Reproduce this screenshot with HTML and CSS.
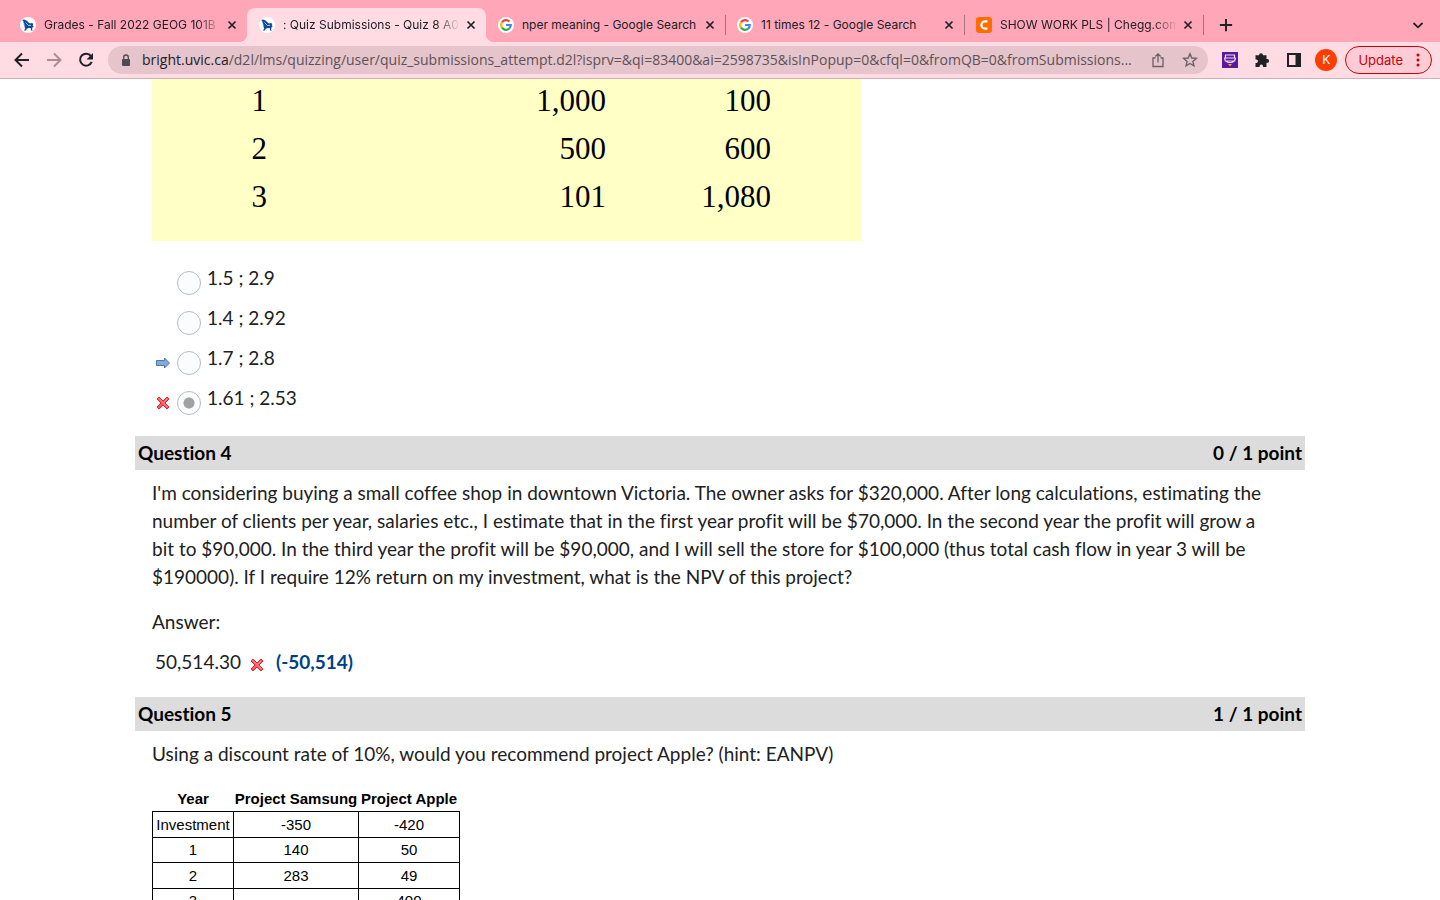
FILE: index.html
```html
<!DOCTYPE html>
<html lang="en">
<head>
    <meta charset="UTF-8">
    <meta name="viewport" content="width=device-width, initial-scale=1.0">
    <title>Quiz Submissions - Quiz 8</title>
    <link rel="stylesheet" href="styles.css">
</head>
<body>
    <svg class="sprite" aria-hidden="true">
        <symbol id="uvic" viewBox="0 0 16 16">
            <circle cx="8" cy="8" r="8" fill="#fff"/>
            <path d="M2.200 3L4 2.400L6.500 3.600L8.300 5.200L10 6.500L12 6L13.400 7L12.600 8.200L13.800 9.200L12.600 10.200L12 12.600L13 13.500H10.800L11 11.300L8.800 11L6.800 11.800L6 13.500H4L5.300 11.200L4 9.500L5.400 9.400L3.400 7.600L4.900 7.500L3 5.500L4 5.300z" fill="#0b4a9b"/>
            <path d="M5.500 5.500L8.500 8.500L11 8.300" fill="none" stroke="#fff" stroke-width=".7"/>
        </symbol>
        <symbol id="google" viewBox="0 0 16 16">
            <circle cx="8" cy="8" r="8" fill="#fff"/>
            <g fill="none" stroke-width="2.2">
                <path d="M4 5.3A4.8 4.8 0 0 1 11.4 4.6" stroke="#ea4335"/>
                <path d="M4 5.3A4.8 4.8 0 0 0 4 10.7" stroke="#fbbc05"/>
                <path d="M4 10.7A4.8 4.8 0 0 0 11.1 11.7" stroke="#34a853"/>
                <path d="M8 8H12.8A4.8 4.8 0 0 1 11.1 11.7" stroke="#4285f4"/>
            </g>
        </symbol>
        <symbol id="chegg" viewBox="0 0 16 16">
            <rect width="16" height="16" rx="3" fill="#ff6d00"/>
            <path d="M11.4 4.4H9A3.6 3.6 0 0 0 9 11.6H11.4" fill="none" stroke="#fff" stroke-width="2.2"/>
        </symbol>
        <symbol id="close" viewBox="0 0 16 16">
            <path d="M4.5 4.5l7 7M11.5 4.5l-7 7" stroke="#202124" stroke-width="1.7"/>
        </symbol>
        <symbol id="wrong" viewBox="0 0 14 14">
            <path d="M3 1L7 5l4-4 2 2-4 4 4 4-2 2-4-4-4 4-2-2 4-4-4-4z" fill="#ff5a5f" stroke="#e8222a" stroke-width="1"/>
            <path d="M3 2.5L11.5 11M11 3L8.5 5.5" stroke="#ff9a9a" stroke-width="1" fill="none"/>
        </symbol>
    </svg>

    <header class="browser">
        <div class="tab-strip">
            <div class="tab">
                <svg class="favicon"><use href="#uvic"/></svg>
                <span class="tab-title fade">Grades - Fall 2022 GEOG 101B</span>
                <button class="tab-close" aria-label="Close tab"><svg><use href="#close"/></svg></button>
            </div>
            <div class="tab active">
                <svg class="favicon"><use href="#uvic"/></svg>
                <span class="tab-title fade">: Quiz Submissions - Quiz 8 A0</span>
                <button class="tab-close" aria-label="Close tab"><svg><use href="#close"/></svg></button>
            </div>
            <div class="tab line">
                <svg class="favicon"><use href="#google"/></svg>
                <span class="tab-title">nper meaning - Google Search</span>
                <button class="tab-close" aria-label="Close tab"><svg><use href="#close"/></svg></button>
            </div>
            <div class="tab line">
                <svg class="favicon"><use href="#google"/></svg>
                <span class="tab-title">11 times 12 - Google Search</span>
                <button class="tab-close" aria-label="Close tab"><svg><use href="#close"/></svg></button>
            </div>
            <div class="tab line">
                <svg class="favicon"><use href="#chegg"/></svg>
                <span class="tab-title fade">SHOW WORK PLS | Chegg.com</span>
                <button class="tab-close" aria-label="Close tab"><svg><use href="#close"/></svg></button>
            </div>
            <button class="new-tab" aria-label="New tab">
                <svg viewBox="0 0 16 16"><path d="M8 1v14M1 8h14" stroke="#202124" stroke-width="2.200"/></svg>
            </button>
            <button class="tab-search" aria-label="Search tabs">
                <svg viewBox="0 0 16 16"><path d="M3.500 6L8 10.300L12.500 6" fill="none" stroke="#202124" stroke-width="1.800"/></svg>
            </button>
        </div>

        <div class="toolbar">
            <div class="nav">
                <button aria-label="Back"><svg viewBox="0 0 16 16"><path d="M15 8H2M8 1.500L1.500 8L8 14.500" fill="none" stroke="#202124" stroke-width="2"/></svg></button>
                <button aria-label="Forward"><svg viewBox="0 0 16 16"><path d="M1 8H14M8 1.500L14.500 8L8 14.500" fill="none" stroke="#a58f95" stroke-width="2"/></svg></button>
                <button aria-label="Reload"><svg viewBox="0 0 16 16"><path d="M13 4.200A6 6 0 1 0 13.700 9.800" fill="none" stroke="#202124" stroke-width="2"/><path d="M15 1v6.500H8.500z" fill="#202124"/></svg></button>
            </div>
            <div class="address">
                <svg class="lock" viewBox="0 0 10 13"><rect x="1" y="5" width="8" height="7" rx="1" fill="#4d4a50"/><path d="M2.700 5V3.300a2.300 2.300 0 0 1 4.600 0V5" fill="none" stroke="#4d4a50" stroke-width="1.300"/></svg>
                <span class="url"><b>bright.uvic.ca</b>/d2l/lms/quizzing/user/quiz_submissions_attempt.d2l?isprv=&amp;qi=83400&amp;ai=2598735&amp;isInPopup=0&amp;cfql=0&amp;fromQB=0&amp;fromSubmissions...</span>
                <button aria-label="Share"><svg viewBox="0 0 16 16"><path d="M5.500 6H3v8.500h10V6h-2.500M8 10.500V2M5.300 4.500L8 1.800l2.700 2.700" fill="none" stroke="#6b6166" stroke-width="1.300"/></svg></button>
                <button aria-label="Bookmark"><svg viewBox="0 0 16 16"><path d="M8 1.800l1.800 4.200 4.500.4-3.400 3 1 4.400L8 11.500l-3.900 2.300 1-4.400-3.400-3 4.500-.4z" fill="none" stroke="#6b6166" stroke-width="1.400"/></svg></button>
            </div>
            <div class="extensions">
                <button aria-label="Coupon extension"><svg viewBox="0 0 16 16"><rect width="16" height="16" fill="#5a189a"/><path d="M3.500 3h9v3h-9zM2.500 5.500L3.300 9h9.400l.8-3.500M4 9l2 1.500h4L12 9" fill="none" stroke="#e9dcf7" stroke-width="1.200"/><path d="M6 12h4l-2 2.500z" fill="#f0a33a"/></svg></button>
                <button aria-label="Extensions"><svg viewBox="0 0 16 16"><path d="M5 3.300a2 2 0 0 1 4 0H12.500V7h.7a1.900 1.900 0 0 1 0 3.800h-.7V15H9v-.8a1.700 1.700 0 0 0-3.400 0v.8H1.500v-4h.7a1.800 1.800 0 0 0 0-3.600h-.7V3.300z" fill="#202124"/></svg></button>
                <button aria-label="Side panel"><svg viewBox="0 0 16 16"><path d="M1 1h14v14H1zM3 3v10h6.500V3z" fill="#202124" fill-rule="evenodd"/></svg></button>
                <button class="avatar" aria-label="Profile">K</button>
                <button class="update">Update
                    <svg viewBox="0 0 4 14"><path d="M2 2v0M2 7v0M2 12v0" stroke="#c5000b" stroke-width="3" stroke-linecap="round"/></svg>
                </button>
            </div>
        </div>
    </header>

    <main class="page">
        <table class="cash-flows">
            <tr><td>1</td><td>1,000</td><td>100</td></tr>
            <tr><td>2</td><td>500</td><td>600</td></tr>
            <tr><td>3</td><td>101</td><td>1,080</td></tr>
        </table>

        <div class="options">
            <div class="option">
                <span class="mark"></span>
                <input type="radio" name="q3" id="q3a">
                <label for="q3a">1.5 ; 2.9</label>
            </div>
            <div class="option">
                <span class="mark"></span>
                <input type="radio" name="q3" id="q3b">
                <label for="q3b">1.4 ; 2.92</label>
            </div>
            <div class="option">
                <span class="mark"><svg viewBox="0 0 14 14"><path d="M.5 4.500h8v-2.500L13.500 7l-5 5V9.500h-8z" fill="#86a9dc" stroke="#4d74b0"/></svg></span>
                <input type="radio" name="q3" id="q3c">
                <label for="q3c">1.7 ; 2.8</label>
            </div>
            <div class="option">
                <span class="mark"><svg><use href="#wrong"/></svg></span>
                <input type="radio" name="q3" id="q3d" checked>
                <label for="q3d">1.61 ; 2.53</label>
            </div>
        </div>

        <section>
            <h2 class="question-bar"><span>Question 4</span><span>0 / 1 point</span></h2>
            <div class="question">
                <p>I'm considering buying a small coffee shop in downtown Victoria. The owner asks for $320,000. After long calculations, estimating the number of clients per year, salaries etc., I estimate that in the first year profit will be $70,000. In the second year the profit will grow a bit to $90,000. In the third year the profit will be $90,000, and I will sell the store for $100,000 (thus total cash flow in year 3 will be $190000). If I require 12% return on my investment, what is the NPV of this project?</p>
                <p class="answer-label">Answer:</p>
                <p class="answer">50,514.30 <svg><use href="#wrong"/></svg> <strong>(-50,514)</strong></p>
            </div>
        </section>

        <section>
            <h2 class="question-bar"><span>Question 5</span><span>1 / 1 point</span></h2>
            <div class="question">
                <p>Using a discount rate of 10%, would you recommend project Apple? (hint: EANPV)</p>
                <table class="projects">
                    <thead>
                        <tr><th>Year</th><th>Project Samsung</th><th>Project Apple</th></tr>
                    </thead>
                    <tbody>
                        <tr><td>Investment</td><td>-350</td><td>-420</td></tr>
                        <tr><td>1</td><td>140</td><td>50</td></tr>
                        <tr><td>2</td><td>283</td><td>49</td></tr>
                        <tr><td>3</td><td></td><td>400</td></tr>
                    </tbody>
                </table>
            </div>
        </section>
    </main>
</body>
</html>
```
FILE: styles.css
```css
* {
    box-sizing: border-box;
}
body {
    margin: 0;
    height: 100vh;
    display: flex;
    flex-direction: column;
    overflow: hidden;
    background: #fff;
    color: #202122;
    font-family: Lato, sans-serif;
    font-size: 19px;
    font-variant-ligatures: none;
    line-height: 28px;
}
button {
    padding: 0;
    border: 0;
    background: none;
    font: inherit;
    cursor: pointer;
}
button svg {
    display: block;
    width: 16px;
    height: 16px;
}
.sprite {
    display: none;
}

/* browser chrome */
.browser {
    flex: none;
    font-family: Inter, sans-serif;
    border-bottom: 1px solid #cfb0b8;
}
.tab-strip {
    display: flex;
    align-items: flex-end;
    height: 42px;
    padding: 0 14px 0 8px;
    background: #ffa6b9;
    color: #202124;
    font-size: 12px;
    line-height: 16px;
}
.tab {
    position: relative;
    display: flex;
    align-items: center;
    flex: 0 1 239px;
    height: 34px;
    min-width: 0;
    padding: 0 7px 0 12px;
}
.tab.active {
    background: #ffdce3;
    border-radius: 8px 8px 0 0;
}
.tab.active::before,
.tab.active::after {
    content: "";
    position: absolute;
    bottom: 0;
    width: 8px;
    height: 8px;
}
.tab.active::before {
    left: -8px;
    background: radial-gradient(circle at 0 0, transparent 8px, #ffdce3 8px);
}
.tab.active::after {
    right: -8px;
    background: radial-gradient(circle at 100% 0, transparent 8px, #ffdce3 8px);
}
.tab.line::after {
    content: "";
    position: absolute;
    right: -1px;
    top: 7px;
    width: 1px;
    height: 20px;
    background: #a8707d;
}
.favicon {
    flex: none;
    width: 16px;
    height: 16px;
    margin-right: 8px;
}
.tab-title {
    flex: 1;
    min-width: 0;
    overflow: hidden;
    white-space: nowrap;
}
.tab-title.fade {
    -webkit-mask-image: linear-gradient(to left, transparent, #000 24px);
    mask-image: linear-gradient(to left, transparent, #000 24px);
}
.tab-close {
    flex: none;
    margin-left: 3px;
}
.new-tab {
    margin: 0 auto 9px 16px;
}
.new-tab svg {
    width: 14px;
    height: 16px;
}
.tab-search {
    margin-bottom: 9px;
}
.toolbar {
    display: flex;
    align-items: center;
    height: 36px;
    padding: 0 8px 0 14px;
    background: #ffdce3;
}
.nav {
    display: flex;
    gap: 16px;
    margin-right: 14px;
}
.address {
    display: flex;
    align-items: center;
    flex: 1;
    min-width: 0;
    height: 28px;
    padding: 0 10px 0 13px;
    gap: 16px;
    border-radius: 14px;
    background: #e5c4cb;
}
.lock {
    flex: none;
    width: 10px;
    height: 13px;
    margin-right: -5px;
}
.url {
    flex: 1;
    margin-right: -8px;
    overflow: hidden;
    white-space: nowrap;
    font-family: "Open Sans", sans-serif;
    font-size: 14px;
    line-height: 20px;
    color: #5d5257;
}
.url b {
    font-weight: normal;
    color: #202124;
}
.extensions {
    display: flex;
    align-items: center;
    gap: 16px;
    margin-left: 14px;
}
.avatar {
    width: 22px;
    height: 22px;
    margin: 0 -8px 0 -3px;
    border-radius: 50%;
    background: #ff3d00;
    color: #fff;
    font-size: 12px;
    line-height: 22px;
}
.update {
    display: flex;
    align-items: center;
    gap: 13px;
    height: 28px;
    padding: 0 11px 0 12px;
    border: 1px solid #c5000b;
    border-radius: 14px;
    background: #ffccd5;
    color: #c5000b;
    font-size: 13px;
}
.update svg {
    width: 4px;
    height: 14px;
}

/* quiz */
.page {
    flex: 1;
    min-height: 0;
    overflow: hidden;
    width: 100%;
    max-width: 1170px;
    margin: 0 auto;
}
.cash-flows {
    width: 709px;
    margin-left: 17px;
    padding-bottom: 18px;
    border-spacing: 0;
    background: #ffffc6;
    color: #000;
    font-family: "Liberation Serif", serif;
    font-size: 31px;
    line-height: 43px;
}
.cash-flows td {
    height: 48px;
    padding: 0;
    text-align: right;
    vertical-align: top;
}
.cash-flows td:nth-child(1) {
    width: 115px;
}
.cash-flows td:nth-child(2) {
    width: 339px;
}
.cash-flows td:nth-child(3) {
    padding-right: 90px;
}
.options {
    padding: 22px 0 13px 21px;
}
.option {
    display: flex;
    align-items: center;
    height: 40px;
}
.mark {
    display: flex;
    width: 21px;
}
.mark svg,
.answer svg {
    width: 14px;
    height: 14px;
}
.option input {
    appearance: none;
    width: 24px;
    height: 24px;
    margin: 0 6px 0 0;
    border: 1px solid #b8bbbe;
    border-radius: 50%;
    background: #fbfcfe;
}
.option input:checked {
    background: radial-gradient(circle, #a0a1a2 5px, #fbfcfe 6px);
}
.option label {
    padding-bottom: 11px;
}
.question-bar {
    display: flex;
    justify-content: space-between;
    margin: 0;
    padding: 3px;
    background: #dcdcdc;
    color: #000;
    font-size: 19px;
    font-weight: bold;
}
.question {
    padding: 9px 28px 21px 17px;
}
.question p {
    margin: 0;
}
.question .answer-label {
    margin-top: 17px;
}
.question .answer {
    display: flex;
    align-items: center;
    margin: 12px 0 0 3px;
}
.answer svg {
    margin: 5px 12px 0 9px;
}
.answer strong {
    color: #003f87;
}
.projects {
    margin-top: 19px;
    border-collapse: collapse;
    color: #000;
    font-family: "Liberation Sans", sans-serif;
    font-size: 15px;
    line-height: 18px;
    text-align: center;
}
.projects th {
    padding: 3px 1px;
}
.projects th:nth-child(1) {
    width: 81px;
}
.projects th:nth-child(2) {
    width: 125px;
}
.projects th:nth-child(3) {
    width: 101px;
}
.projects td {
    height: 26px;
    padding: 3px;
    border: 1px solid #000;
}
.projects tr:nth-child(even) td {
    height: 25px;
}
```
